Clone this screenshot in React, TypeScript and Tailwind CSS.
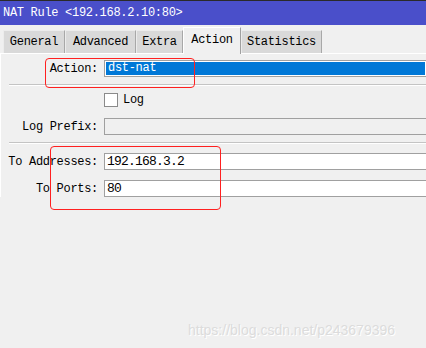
import React from 'react';

const mono = { fontFamily: '"Liberation Mono", "Noto Sans CJK SC", monospace' };

const tabs = [
  { label: 'General', w: 'w-[62px]' },
  { label: 'Advanced', w: 'w-[71px]' },
  { label: 'Extra', w: 'w-[47px]' },
  { label: 'Action', w: 'w-[58px]', active: true },
  { label: 'Statistics', w: 'w-[81px]' },
];

const Label: React.FC<{ text: string }> = ({ text }) => (
  <div className="w-[98px] shrink-0 pr-[1px] text-right text-[12px] leading-[16px] tracking-[-0.3px] text-black">{text}</div>
);

const App: React.FC = () => {
  return (
    <div className="relative w-[426px] h-[348px] overflow-hidden bg-[#f0f0f0]" style={mono}>
      {/* title bar */}
      <div className="h-[25px] bg-[#4a4fca] border-t border-[#2a2a2a] flex items-center pl-[3px] text-white text-[12px] tracking-[-0.3px]">
        NAT Rule &lt;192.168.2.10:80&gt;
      </div>

      {/* tabs */}
      <div className="h-[28px] flex items-end pl-[3px]">
        {tabs.map((t) =>
          t.active ? (
            <div
              key={t.label}
              className={`${t.w} relative z-10 -mb-px h-[27px] bg-[#f0f0f0] border-t border-l border-white border-r border-r-[#a0a0a0] flex items-center justify-center text-[12px] tracking-[-0.3px] text-black pb-[3px]`}
            >
              {t.label}
            </div>
          ) : (
            <div
              key={t.label}
              className={`${t.w} h-[23px] bg-[#d9d9d9] border-t border-l border-[#ececec] border-r border-r-[#a8a8a8] flex items-center justify-center text-[12px] tracking-[-0.3px] text-black`}
            >
              {t.label}
            </div>
          )
        )}
      </div>

      {/* panel */}
      <div className="border-t border-white border-l border-l-white pt-[6px]">
        <div className="flex items-center gap-[5px] h-[17px]">
          <Label text="Action:" />
          <div className="flex-1 h-[17px] border-y border-l border-[#a0a0a0] bg-white p-px">
            <div className="h-full bg-[#0078d7] text-white text-[12px] tracking-[-0.3px] pl-[2px] leading-[13px]">dst-nat</div>
          </div>
        </div>

        <div className="ml-[8px] mt-[7px] h-[2px] border-t border-[#c4c4c4] border-b border-b-white" />

        <div className="flex items-center gap-[5px] mt-[7px] h-[14px]">
          <div className="w-[98px] shrink-0" />
          <div className="w-[14px] h-[14px] bg-white border border-[#8a8a8a]" />
          <div className="text-[12px] leading-[14px] tracking-[-0.3px] text-black">Log</div>
        </div>

        <div className="flex items-center gap-[5px] mt-[11px] h-[17px]">
          <Label text="Log Prefix:" />
          <div className="flex-1 h-[17px] border-y border-l border-[#a0a0a0] bg-[#f0f0f0]" />
        </div>

        <div className="ml-[8px] mt-[7px] h-[2px] border-t border-[#c4c4c4] border-b border-b-white" />

        <div className="flex items-center gap-[5px] mt-[9px] h-[17px]">
          <Label text="To Addresses:" />
          <div className="flex-1 h-[17px] border-y border-l border-[#a0a0a0] bg-white pl-[2px] text-[13px] leading-[15px] tracking-[-0.8px] text-black">
            192.168.3.2
          </div>
        </div>

        <div className="flex items-center gap-[5px] mt-[10px] h-[17px]">
          <Label text="To Ports:" />
          <div className="flex-1 h-[17px] border-y border-l border-[#a0a0a0] bg-white pl-[2px] text-[13px] leading-[15px] tracking-[-0.8px] text-black">
            80
          </div>
        </div>
      </div>

      {/* annotations */}
      <div className="absolute left-[45px] top-[58px] w-[150px] h-[30px] border-[1.5px] border-[#ff2020] rounded-[4px]" />
      <div className="absolute left-[50px] top-[146px] w-[171px] h-[64px] border-[1.5px] border-[#ff2020] rounded-[4px]" />

      {/* watermark */}
      <div
        className="absolute left-[188px] top-[320px] text-[14px] text-[#dcdcdc]"
        style={{ fontFamily: '"Liberation Sans", Arial, sans-serif', textShadow: '1px 1px 0 #ffffff' }}
      >
        https://blog.csdn.net/p243679396
      </div>
    </div>
  );
};

export default App;
